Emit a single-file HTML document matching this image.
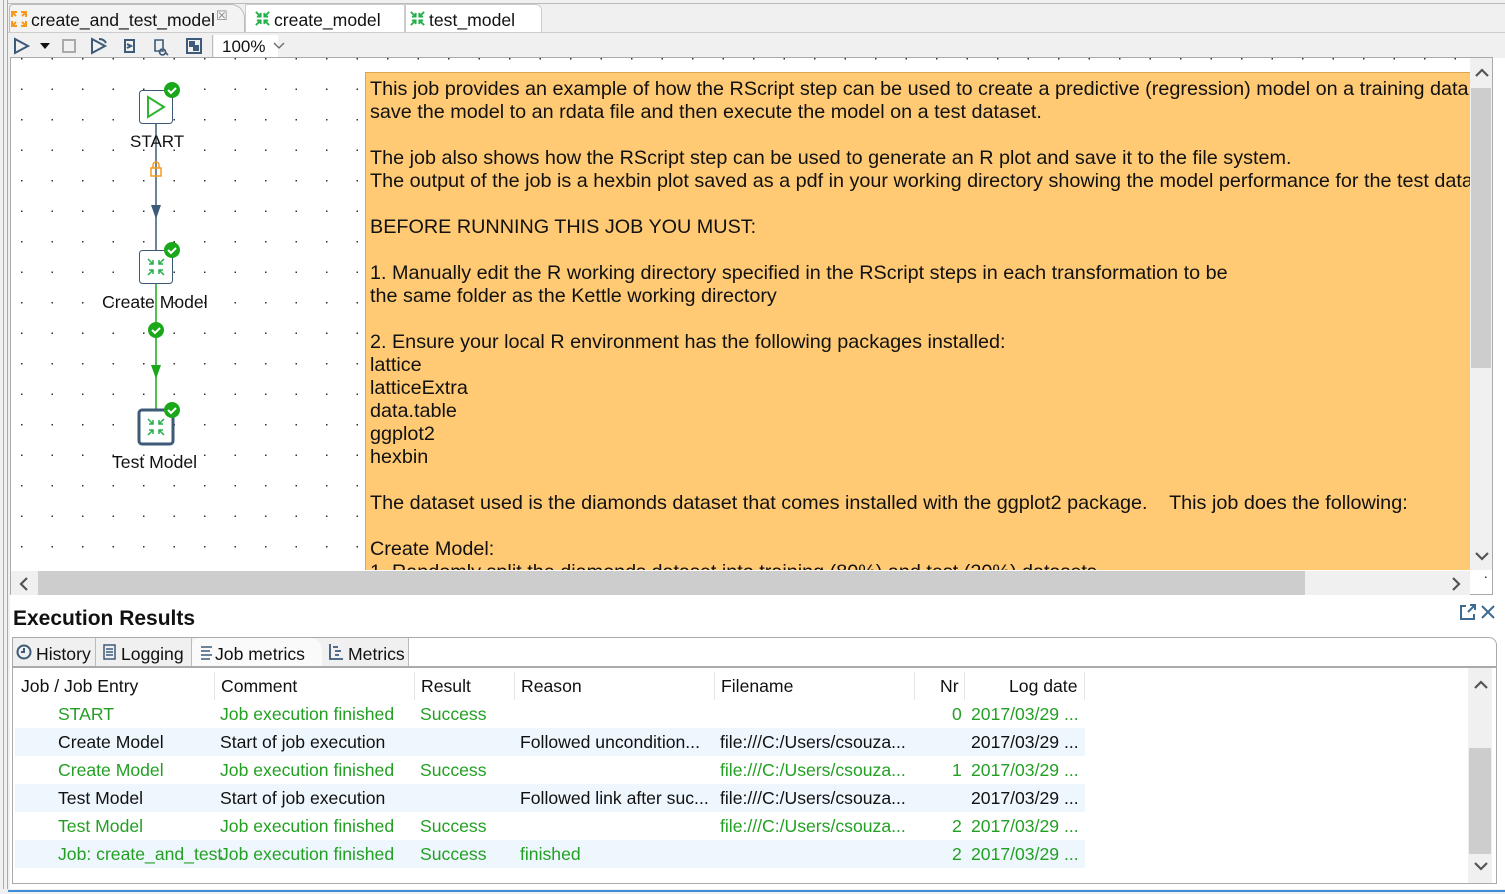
<!DOCTYPE html>
<html><head><meta charset="utf-8"><style>
*{margin:0;padding:0;box-sizing:border-box}
body{width:1505px;height:894px;overflow:hidden;background:#fff;font-family:"Liberation Sans",sans-serif;position:relative;color:#111}
.a{position:absolute}
.t{font-size:17px;white-space:nowrap}
.note{position:absolute;left:365px;top:72px;width:1105px;height:498px;background:#ffca73;border:1px solid #d9a750;border-right:none;border-bottom:none;overflow:hidden;font-size:19.8px;line-height:23px;padding:5px 0 0 4px;white-space:nowrap;color:#111}
.row{position:absolute;left:15px;width:1070px;height:28px;font-size:17.6px;line-height:29px;white-space:nowrap}
.row span{position:absolute}
.g{color:#23a023}
.blue{background:#eef6fe}
</style></head><body>
<div class="a" style="left:0;top:0;width:10px;height:894px;background:#f0f0f0"></div>
<div class="a" style="left:3px;top:0;width:1px;height:894px;background:#aaa"></div>
<div class="a" style="left:7px;top:0;width:1px;height:894px;background:#aaa"></div>
<div class="a" style="left:8px;top:0;width:1497px;height:58px;background:#f0f0f0"></div>
<div class="a" style="left:8px;top:3px;width:1497px;height:1px;background:#bbb"></div>
<div class="a" style="left:9px;top:4px;width:236px;height:29px;background:#f3f3f3;border:1px solid #bbb;border-bottom:none;border-radius:4px 14px 0 0"></div>
<div class="a" style="left:245px;top:4px;width:160px;height:28px;background:#fff;border:1px solid #ccc;border-bottom:none"></div>
<div class="a" style="left:405px;top:4px;width:137px;height:28px;background:#fff;border:1px solid #ccc;border-bottom:none;border-radius:0 6px 0 0"></div>
<div class="a" style="left:8px;top:32px;width:1497px;height:1px;background:#ccc"></div>
<svg class="a" style="left:10px;top:10px" width="18" height="18" viewBox="0 0 18 18" stroke="#f59a1c" stroke-width="2" fill="none"><path d="M2 7V2h5M2 2l4 4M16 7V2h-5M16 2l-4 4M2 11v5h5M2 16l4-4M16 11v5h-5M16 16l-4-4"/></svg>
<div class="a t" style="left:31px;top:10px;font-size:17.6px">create_and_test_model</div>
<div class="a" style="left:216px;top:8px;font-size:13px;color:#888">☒</div>
<svg class="a" style="left:254px;top:10px" width="17" height="17" viewBox="0 0 18 18" stroke="#22b04a" stroke-width="2" fill="none"><path d="M2 2l5 5M7 3v4H3M16 2l-5 5M11 3v4h4M2 16l5-5M3 11h4v4M16 16l-5-5M15 11h-4v4"/></svg>
<div class="a t" style="left:274px;top:10px;font-size:17.6px">create_model</div>
<svg class="a" style="left:409px;top:10px" width="17" height="17" viewBox="0 0 18 18" stroke="#22b04a" stroke-width="2" fill="none"><path d="M2 2l5 5M7 3v4H3M16 2l-5 5M11 3v4h4M2 16l5-5M3 11h4v4M16 16l-5-5M15 11h-4v4"/></svg>
<div class="a t" style="left:429px;top:10px;font-size:17.6px">test_model</div>
<svg class="a" style="left:12px;top:36px" width="200" height="20" viewBox="0 0 200 20" fill="none" stroke="#3d5a78" stroke-width="2">
<path d="M3 3l13 7-13 7z"/>
<path d="M28 7h10l-5 6z" fill="#111" stroke="none"/>
<rect x="51" y="4" width="12" height="12" stroke="#aaa"/>
<path d="M80 3l13 7-13 7z"/><path d="M87 3c4 0 6 2 7 4" />
<path d="M113 4h9v12h-9zM115 8l4 2-4 2"/>
<path d="M143 4h8v11h-8zM150 13a3 3 0 1 0 1 0M153 16l3 3" stroke-width="1.6"/>
<rect x="175" y="3" width="14" height="14"/><rect x="178" y="6" width="4" height="4" fill="#3d5a78"/><rect x="182" y="10" width="4" height="4" fill="#3d5a78"/>
</svg>
<div class="a" style="left:212px;top:35px;width:1px;height:22px;background:#bbb"></div>
<div class="a" style="left:214px;top:35px;width:64px;height:23px;background:#fff"></div>
<div class="a t" style="left:222px;top:37px">100%</div>
<svg class="a" style="left:273px;top:42px" width="12" height="8" fill="none" stroke="#666" stroke-width="1.3"><path d="M1 1l5 5 5-5"/></svg>
<div class="a" style="left:10px;top:57px;width:1483px;height:538px;border:1px solid #aaa;background-color:#fff;background-image:radial-gradient(circle,#333 0.8px,transparent 1px);background-size:30.5px 30.5px;background-position:26px 16px"></div>
<div class="note">This job provides an example of how the RScript step can be used to create a predictive (regression) model on a training data<br>save the model to an rdata file and then execute the model on a test dataset.<br><br>The job also shows how the RScript step can be used to generate an R plot and save it to the file system.<br>The output of the job is a hexbin plot saved as a pdf in your working directory showing the model performance for the test data<br><br>BEFORE RUNNING THIS JOB YOU MUST:<br><br>1. Manually edit the R working directory specified in the RScript steps in each transformation to be<br>the same folder as the Kettle working directory<br><br>2. Ensure your local R environment has the following packages installed:<br>lattice<br>latticeExtra<br>data.table<br>ggplot2<br>hexbin<br><br>The dataset used is the diamonds dataset that comes installed with the ggplot2 package.&nbsp;&nbsp;&nbsp; This job does the following:<br><br>Create Model:<br>1. Randomly split the diamonds dataset into training (80%) and test (20%) datasets</div>
<div class="a" style="left:1470px;top:58px;width:22px;height:512px;background:#f0f0f0"></div>
<div class="a" style="left:1471px;top:88px;width:20px;height:280px;background:#cdcdcd"></div>
<svg class="a" style="left:1475px;top:68px" width="14" height="9" fill="none" stroke="#555" stroke-width="2.2"><path d="M1 8l6-6 6 6"/></svg>
<svg class="a" style="left:1475px;top:552px" width="14" height="9" fill="none" stroke="#555" stroke-width="2.2"><path d="M1 1l6 6 6-6"/></svg>
<div class="a" style="left:11px;top:571px;width:1459px;height:24px;background:#f0f0f0"></div>
<div class="a" style="left:38px;top:571px;width:1267px;height:24px;background:#cdcdcd"></div>
<svg class="a" style="left:19px;top:577px" width="9" height="14" fill="none" stroke="#555" stroke-width="2.2"><path d="M8 1L2 7l6 6"/></svg>
<svg class="a" style="left:1452px;top:577px" width="9" height="14" fill="none" stroke="#555" stroke-width="2.2"><path d="M1 1l6 6-6 6"/></svg>
<svg class="a" style="left:100px;top:75px" width="120" height="380">
<line x1="56" y1="48" x2="56" y2="180" stroke="#3d5a78" stroke-width="1.5"/>
<path d="M51 130l5 14 5-14z" fill="#3d5a78"/>
<rect x="51" y="93" width="10" height="8" fill="none" stroke="#f59a1c" stroke-width="1.5"/>
<path d="M53 93v-3a3 3 0 0 1 6 0v3" fill="none" stroke="#f59a1c" stroke-width="1.5"/>
<line x1="56" y1="208" x2="56" y2="340" stroke="#1aa81a" stroke-width="1.5"/>
<path d="M51 290l5 14 5-14z" fill="#1aa81a"/>
<circle cx="56" cy="255" r="8" fill="#1aa81a"/><path d="M52 255l3 3 5-5" stroke="#fff" stroke-width="2" fill="none"/>
<rect x="39.5" y="15.5" width="33" height="33" rx="3" fill="#fff" stroke="#3d5a78"/>
<path d="M48 22l16 10-16 10z" fill="none" stroke="#2db52d" stroke-width="2"/>
<rect x="39.5" y="175.5" width="33" height="33" rx="3" fill="#fff" stroke="#3d5a78"/>
<g stroke="#22b04a" stroke-width="1.5" fill="none" transform="translate(47,183)"><path d="M1 1l5 5M6 2v4H2M17 1l-5 5M12 2v4h4M1 17l5-5M2 12h4v4M17 17l-5-5M16 12h-4v4"/></g>
<rect x="39" y="335" width="34" height="34" rx="3" fill="#fff" stroke="#3d5a78" stroke-width="3"/>
<g stroke="#22b04a" stroke-width="1.5" fill="none" transform="translate(47,343)"><path d="M1 1l5 5M6 2v4H2M17 1l-5 5M12 2v4h4M1 17l5-5M2 12h4v4M17 17l-5-5M16 12h-4v4"/></g>
<g><circle cx="72" cy="15" r="8" fill="#1aa81a"/><path d="M68 15l3 3 5-5" stroke="#fff" stroke-width="2" fill="none"/></g>
<g><circle cx="72" cy="175" r="8" fill="#1aa81a"/><path d="M68 175l3 3 5-5" stroke="#fff" stroke-width="2" fill="none"/></g>
<g><circle cx="72" cy="335" r="8" fill="#1aa81a"/><path d="M68 335l3 3 5-5" stroke="#fff" stroke-width="2" fill="none"/></g>
</svg>
<div class="a t" style="left:130px;top:132px">START</div>
<div class="a t" style="left:102px;top:292px;font-size:17.6px">Create Model</div>
<div class="a t" style="left:112px;top:452px;font-size:17.6px">Test Model</div>
<div class="a" style="left:13px;top:607px;font-size:21px;font-weight:bold">Execution Results</div>
<svg class="a" style="left:1459px;top:603px" width="38" height="18" fill="none" stroke="#3d6a8e" stroke-width="2"><path d="M7 3H2v13h13v-5M9 9l7-7M11 2h5v5"/><path d="M23 3l12 12M35 3L23 15"/></svg>
<div class="a" style="left:12px;top:637px;width:1485px;height:247px;border:1px solid #aaa;border-radius:0 8px 0 0"></div>
<div class="a" style="left:13px;top:638px;width:396px;height:29px;background:#f0f0f0"></div>
<div class="a" style="left:13px;top:638px;width:83px;height:29px;border-right:1px solid #bbb"></div>
<div class="a" style="left:96px;top:638px;width:96px;height:29px;border-right:1px solid #bbb"></div>
<div class="a" style="left:192px;top:638px;width:130px;height:29px;background:#fafafa;border-radius:6px 12px 0 0"></div>
<div class="a" style="left:408px;top:638px;width:1px;height:29px;background:#bbb"></div>
<div class="a" style="left:12px;top:666px;width:1485px;height:2px;background:#aaa"></div>
<svg class="a" style="left:16px;top:644px" width="18" height="18" fill="none" stroke="#3d5a78" stroke-width="2"><circle cx="8" cy="8" r="6.5"/><path d="M8 4v4h-3"/></svg>
<div class="a t" style="left:36px;top:644px;font-size:17.6px">History</div>
<svg class="a" style="left:102px;top:643px" width="16" height="18" fill="none" stroke="#3d5a78" stroke-width="1.5"><rect x="2" y="2" width="11" height="14"/><path d="M4 6h7M4 9h7M4 12h7"/></svg>
<div class="a t" style="left:121px;top:644px;font-size:17.6px">Logging</div>
<svg class="a" style="left:195px;top:643px" width="18" height="18" fill="none" stroke="#3d5a78" stroke-width="1.5"><path d="M6 4h11M6 8h9M6 12h11M6 16h9"/></svg>
<div class="a t" style="left:215px;top:644px;font-size:17.6px">Job metrics</div>
<svg class="a" style="left:328px;top:643px" width="18" height="18" fill="none" stroke="#3d5a78" stroke-width="1.8"><path d="M2 1v15h13M5 4h5M7 8h6M7 12h4"/></svg>
<div class="a t" style="left:348px;top:644px;font-size:17.6px">Metrics</div>
<div class="a" style="left:13px;top:668px;width:1455px;height:215px;background:#fff"></div>
<div class="a" style="left:1468px;top:668px;width:24px;height:215px;background:#f0f0f0"></div>
<div class="a" style="left:1469px;top:748px;width:22px;height:106px;background:#cdcdcd"></div>
<svg class="a" style="left:1474px;top:680px" width="14" height="9" fill="none" stroke="#555" stroke-width="2.2"><path d="M1 8l6-6 6 6"/></svg>
<svg class="a" style="left:1474px;top:862px" width="14" height="9" fill="none" stroke="#555" stroke-width="2.2"><path d="M1 1l6 6 6-6"/></svg>
<div class="row" style="top:672px"><span style="left:6px">Job / Job Entry</span><span style="left:206px">Comment</span><span style="left:406px">Result</span><span style="left:506px">Reason</span><span style="left:706px">Filename</span><span style="left:925px">Nr</span><span style="left:994px">Log date</span></div>
<div class="a" style="left:214px;top:672px;width:1px;height:28px;background:#e5e5e5"></div>
<div class="a" style="left:414px;top:672px;width:1px;height:28px;background:#e5e5e5"></div>
<div class="a" style="left:514px;top:672px;width:1px;height:28px;background:#e5e5e5"></div>
<div class="a" style="left:714px;top:672px;width:1px;height:28px;background:#e5e5e5"></div>
<div class="a" style="left:914px;top:672px;width:1px;height:28px;background:#e5e5e5"></div>
<div class="a" style="left:964px;top:672px;width:1px;height:28px;background:#e5e5e5"></div>
<div class="a" style="left:1084px;top:672px;width:1px;height:28px;background:#e5e5e5"></div>
<div class="row g" style="top:700px"><span style="left:43px">START</span><span style="left:205px">Job execution finished</span><span style="left:405px">Success</span><span style="left:937px">0</span><span style="left:956px">2017/03/29 ...</span></div>
<div class="row blue" style="top:728px"><span style="left:43px">Create Model</span><span style="left:205px">Start of job execution</span><span style="left:505px">Followed uncondition...</span><span style="left:705px">file:///C:/Users/csouza...</span><span style="left:956px">2017/03/29 ...</span></div>
<div class="row g" style="top:756px"><span style="left:43px">Create Model</span><span style="left:205px">Job execution finished</span><span style="left:405px">Success</span><span style="left:705px">file:///C:/Users/csouza...</span><span style="left:937px">1</span><span style="left:956px">2017/03/29 ...</span></div>
<div class="row blue" style="top:784px"><span style="left:43px">Test Model</span><span style="left:205px">Start of job execution</span><span style="left:505px">Followed link after suc...</span><span style="left:705px">file:///C:/Users/csouza...</span><span style="left:956px">2017/03/29 ...</span></div>
<div class="row g" style="top:812px"><span style="left:43px">Test Model</span><span style="left:205px">Job execution finished</span><span style="left:405px">Success</span><span style="left:705px">file:///C:/Users/csouza...</span><span style="left:937px">2</span><span style="left:956px">2017/03/29 ...</span></div>
<div class="row blue g" style="top:840px"><span style="left:43px">Job: create_and_test</span><span style="left:205px">Job execution finished</span><span style="left:405px">Success</span><span style="left:505px">finished</span><span style="left:937px">2</span><span style="left:956px">2017/03/29 ...</span></div>
<div class="a" style="left:0;top:889px;width:1505px;height:5px;background:#f0f0f0"></div>
<div class="a" style="left:8px;top:890px;width:1497px;height:2px;background:#3c8ed8"></div>
</body></html>
